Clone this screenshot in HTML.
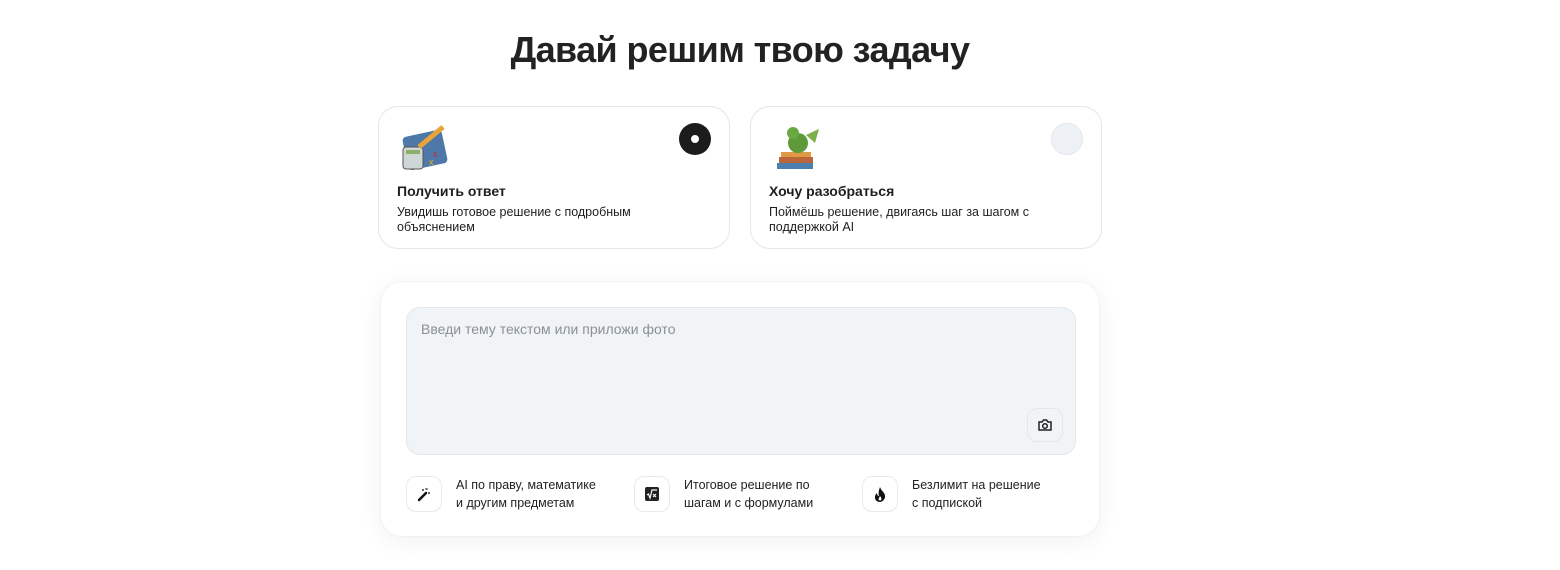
<!DOCTYPE html>
<html><head><meta charset="utf-8"><style>
*{box-sizing:border-box;margin:0;padding:0}
body{width:1560px;height:570px;background:#fff;font-family:"Liberation Sans",sans-serif;color:#1f1f1f;position:relative;overflow:hidden}
h1{position:absolute;top:29px;left:0;width:1480px;text-align:center;font-size:36px;font-weight:700;letter-spacing:-0.6px;color:#222}
.card{position:absolute;top:106px;width:352px;height:143px;border:1px solid #e3e7ec;border-radius:20px;background:#fff}
.card .t{position:absolute;left:18px;top:76px;font-size:14px;font-weight:700}
.card .d{position:absolute;left:18px;top:98px;font-size:12.5px;line-height:15px;width:270px}
.radio{position:absolute;right:18px;top:16px;width:32px;height:32px;border-radius:50%}
.emoji{position:absolute;left:20px;top:18px;width:54px;height:48px}
.box{position:absolute;left:380px;top:281px;width:720px;height:256px;border-radius:22px;background:#fff;box-shadow:0 4px 24px rgba(0,0,0,0.06);border:1px solid #f0f2f4}
.ta{position:absolute;left:25px;top:25px;width:670px;height:148px;background:#f1f4f7;border:1px solid #e2e7ec;border-radius:14px}
.ta span{position:absolute;left:14px;top:13px;font-size:14px;color:#8a9096}
.cam{position:absolute;right:12px;bottom:12px;width:36px;height:34px;border:1px solid #e2e7ec;border-radius:10px;background:#f1f4f7;display:flex;align-items:center;justify-content:center}
.f{position:absolute;top:194px;display:flex;align-items:center}
.fi{width:36px;height:36px;border:1px solid #e6e9ed;border-radius:10px;display:flex;align-items:center;justify-content:center;margin-right:14px}
.f p{font-size:12.5px;line-height:18px;color:#222}
</style></head><body>
<h1>Давай решим твою задачу</h1>
<div class="card" style="left:378px">
 <svg class="emoji" viewBox="0 0 54 48"><rect x="6" y="8" width="40" height="34" rx="4" fill="#4d78a8" transform="rotate(-12 26 25)"/><rect x="4" y="22" width="20" height="22" rx="3" fill="#cfd6d6" stroke="#555" /><rect x="7" y="25" width="14" height="4" fill="#8bb06a"/><line x1="20" y1="22" x2="44" y2="2" stroke="#e8a33a" stroke-width="5"/><text x="34" y="32" font-size="9" fill="#d23">x</text><text x="30" y="40" font-size="9" fill="#e7b51c">x</text></svg>
 <div class="radio" style="background:#1c1c1c"><div style="position:absolute;left:12px;top:12px;width:8px;height:8px;border-radius:50%;background:#fff"></div></div>
 <div class="t">Получить ответ</div>
 <div class="d">Увидишь готовое решение с подробным объяснением</div>
</div>
<div class="card" style="left:750px">
 <svg class="emoji" viewBox="0 0 54 48"><rect x="8" y="32" width="34" height="6" fill="#b8663a"/><rect x="6" y="38" width="36" height="6" fill="#4a7fb0"/><rect x="10" y="27" width="30" height="5" fill="#d94"/><ellipse cx="27" cy="18" rx="10" ry="10" fill="#5f9a3a"/><circle cx="22" cy="8" r="6" fill="#6aa843"/><path d="M35 10 L48 4 L44 18 Z" fill="#7cb04a"/></svg>
 <div class="radio" style="background:#eef2f6;border:1px solid #e2e7ec"></div>
 <div class="t">Хочу разобраться</div>
 <div class="d">Поймёшь решение, двигаясь шаг за шагом с поддержкой AI</div>
</div>
<div class="box">
 <div class="ta"><span>Введи тему текстом или приложи фото</span>
  <div class="cam"><svg width="16" height="16" viewBox="0 0 16 16" fill="none" stroke="#222" stroke-width="1.5"><path d="M2 5h3l1.5-2h3L11 5h3v8H2z"/><circle cx="8" cy="9" r="2.3"/></svg></div>
 </div>
 <div class="f" style="left:25px"><div class="fi"><svg width="16" height="16" viewBox="0 0 16 16"><path d="M3 14 L10 7" stroke="#111" stroke-width="2.5" stroke-linecap="round"/><path d="M10 2v2M12 3h-2M13 6v2M14 7h-2M7 3v2M8 4H6" stroke="#111" stroke-width="0.8"/></svg></div><p>AI по праву, математике<br>и другим предметам</p></div>
 <div class="f" style="left:253px"><div class="fi"><svg width="14" height="14" viewBox="0 0 14 14"><rect width="14" height="14" rx="2" fill="#222"/><path d="M2 8l1.5-1 1.5 4 2-8h5" stroke="#fff" stroke-width="1.2" fill="none"/><path d="M8 7l3 3M11 7l-3 3" stroke="#fff" stroke-width="1.1"/></svg></div><p>Итоговое решение по<br>шагам и с формулами</p></div>
 <div class="f" style="left:481px"><div class="fi"><svg width="12" height="15" viewBox="0 0 12 15"><path d="M6 0C7 4 12 6 11 10.5 10 14 7 15 6 15 3 15 0.5 13 1 9.5 1.5 7 3 6 3 6 3 8 4 9 5 9 4 6 5 3 6 0Z" fill="#111"/><path d="M6 9c1 1.5 2 2.5 1 4.3C5 14 4 12.5 5 11z" fill="#fff"/></svg></div><p>Безлимит на решение<br>с подпиской</p></div>
</div>
</body></html>
